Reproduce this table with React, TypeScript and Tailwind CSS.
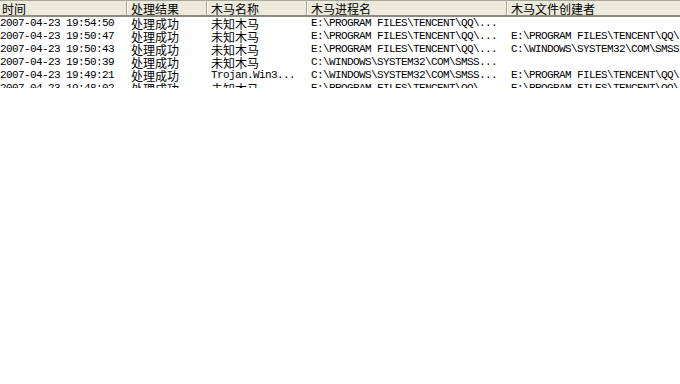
import React from 'react';

interface Row {
  time: string;
  result: string;
  name: string;
  process: string;
  creator: string;
}

const rows: Row[] = [
  { time: '2007-04-23 19:54:50', result: '处理成功', name: '未知木马', process: 'E:\\PROGRAM FILES\\TENCENT\\QQ\\...', creator: '' },
  { time: '2007-04-23 19:50:47', result: '处理成功', name: '未知木马', process: 'E:\\PROGRAM FILES\\TENCENT\\QQ\\...', creator: 'E:\\PROGRAM FILES\\TENCENT\\QQ\\' },
  { time: '2007-04-23 19:50:43', result: '处理成功', name: '未知木马', process: 'E:\\PROGRAM FILES\\TENCENT\\QQ\\...', creator: 'C:\\WINDOWS\\SYSTEM32\\COM\\SMSS' },
  { time: '2007-04-23 19:50:39', result: '处理成功', name: '未知木马', process: 'C:\\WINDOWS\\SYSTEM32\\COM\\SMSS...', creator: '' },
  { time: '2007-04-23 19:49:21', result: '处理成功', name: 'Trojan.Win3...', process: 'C:\\WINDOWS\\SYSTEM32\\COM\\SMSS...', creator: 'E:\\PROGRAM FILES\\TENCENT\\QQ\\' },
  { time: '2007-04-23 19:48:02', result: '处理成功', name: '未知木马', process: 'E:\\PROGRAM FILES\\TENCENT\\QQ\\...', creator: 'E:\\PROGRAM FILES\\TENCENT\\QQ\\' },
];

const headers = ['时间', '处理结果', '木马名称', '木马进程名', '木马文件创建者'];
const widths = ['w-[127px]', 'w-[80px]', 'w-[100px]', 'w-[200px]', 'flex-1'];

const cjk = "font-['SimSun','Noto_Sans_CJK_SC',sans-serif] text-[12px] leading-[13px]";
const mono = "font-['Liberation_Mono',monospace] text-[11px] tracking-[-0.6px] leading-[13px]";

const isCjk = (s: string) => /[\u4e00-\u9fff]/.test(s);

const Cell: React.FC<{ text: string; width: string; first?: boolean }> = ({ text, width, first }) => (
  <div className={`${width} shrink-0 overflow-hidden whitespace-nowrap ${first ? 'pl-0' : 'pl-[4px]'} ${isCjk(text) ? cjk : mono}`}>
    {text}
  </div>
);

const App: React.FC = () => {
  return (
    <div className="w-[680px] h-[384px] bg-white overflow-hidden">
      <div className="h-[88px] overflow-hidden">
        {/* Header */}
        <div className="flex h-[17px] bg-[#ebeadb] border-t border-t-[#a7a69b] border-b-2 border-b-[#8c8a7f]">
          {headers.map((h, i) => (
            <div
              key={h}
              className={`${widths[i]} shrink-0 flex items-center pl-[2px] ${i > 0 ? 'pl-[4px]' : ''} ${i < headers.length - 1 ? 'border-r border-r-[#aca899] shadow-[1px_0_0_#ffffff]' : ''} ${cjk} text-black`}
            >
              {h}
            </div>
          ))}
        </div>
        {/* Rows */}
        {rows.map((r, idx) => (
          <div key={idx} className="flex h-[13px] text-black">
            <Cell text={r.time} width={widths[0]} first />
            <Cell text={r.result} width={widths[1]} />
            <Cell text={r.name} width={widths[2]} />
            <Cell text={r.process} width={widths[3]} />
            <Cell text={r.creator} width={widths[4]} />
          </div>
        ))}
      </div>
    </div>
  );
};

export default App;
